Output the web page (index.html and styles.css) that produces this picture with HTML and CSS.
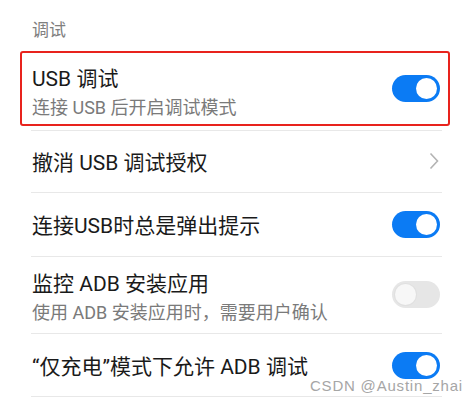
FILE: index.html
```html
<!DOCTYPE html>
<html lang="zh-CN">

<head>
    <meta charset="UTF-8">
    <meta name="viewport" content="width=device-width, initial-scale=1.0">
    <title>调试</title>
    <link rel="stylesheet" href="styles.css">
</head>

<body>
    <div class="page">
        <div class="section-title">调试</div>

        <div class="item highlight">
            <div class="box">
                <div class="text">
                    <div class="title">USB 调试</div>
                    <div class="sub">连接 USB 后开启调试模式</div>
                </div>
                <span class="switch on"></span>
            </div>
        </div>

        <div class="item single">
            <div class="text">
                <div class="title">撤消 USB 调试授权</div>
            </div>
            <svg class="chevron" width="10" height="18" viewBox="0 0 10 18">
                <path d="M1.5 1.5 L8.5 9 L1.5 16.5" fill="none" stroke="#b3b3b3" stroke-width="1.6" />
            </svg>
        </div>

        <div class="item single tall">
            <div class="text">
                <div class="title">连接USB时总是弹出提示</div>
            </div>
            <span class="switch on"></span>
        </div>

        <div class="item double">
            <div class="text">
                <div class="title">监控 ADB 安装应用</div>
                <div class="sub">使用 ADB 安装应用时，需要用户确认</div>
            </div>
            <span class="switch"></span>
        </div>

        <div class="item single last">
            <div class="text">
                <div class="title">“仅充电”模式下允许 ADB 调试</div>
            </div>
            <span class="switch on"></span>
            <span class="watermark">CSDN @Austin_zhai</span>
        </div>
    </div>
</body>

</html>
```

FILE: styles.css
```css
body {
    margin: 0;
    padding: 0;
    background-color: #fff;
    font-family: Roboto, "Noto Sans CJK SC", sans-serif;
    color: #1a1a1a;
}

.page {
    padding: 0 33px 0 31px;
}

.section-title {
    padding-top: 18px;
    margin-bottom: 9px;
    padding-left: 1px;
    font-size: 17px;
    line-height: 24px;
    color: #808080;
}

.item {
    position: relative;
    display: flex;
    align-items: center;
    border-bottom: 1px solid #e8e8e8;
    padding-left: 1px;
    padding-right: 2px;
}

.item.single {
    height: 62px;
}

.item.single .text {
    padding-top: 3px;
}

.item.tall {
    height: 63px;
}

.item.double {
    height: 76px;
    align-items: flex-start;
}

.item.double .text {
    padding-top: 13px;
}

.item.double .switch {
    margin-top: 24px;
}

.item.highlight {
    margin: 0 -8px 0 -11px;
    padding: 0 0 4px 0;
    border-bottom: none;
}

.item.highlight::after {
    content: "";
    position: absolute;
    left: 11px;
    right: 8px;
    bottom: -1px;
    border-bottom: 1px solid #e8e8e8;
}

.box {
    flex: 1;
    display: flex;
    align-items: center;
    height: 71px;
    padding: 0 8px 0 10px;
    border: 2px solid #e8231d;
    border-radius: 3px;
}

.box .text {
    align-self: flex-start;
    padding-top: 12px;
}

.text {
    flex: 1;
}

.title {
    font-size: 21px;
    line-height: 28px;
    color: #1a1a1a;
}

.sub {
    margin-top: 3px;
    font-size: 18px;
    line-height: 24px;
    color: #7a7a7a;
}

.switch {
    position: relative;
    width: 48px;
    height: 27px;
    border-radius: 14px;
    background-color: #e6e6e6;
    flex-shrink: 0;
}

.switch::after {
    content: "";
    position: absolute;
    top: 3px;
    left: 3px;
    width: 21px;
    height: 21px;
    border-radius: 50%;
    background-color: #f7f7f7;
    box-shadow: 0 0 0 1px #e0e0e0;
}

.switch.on {
    background-color: #0b7bf4;
}

.switch.on::after {
    left: 24px;
    background-color: #fff;
    box-shadow: none;
}

.chevron {
    margin-right: 1px;
}

.watermark {
    position: absolute;
    right: -21px;
    bottom: 2px;
    font-family: "Liberation Sans", sans-serif;
    font-size: 15px;
    line-height: 16px;
    color: #a6a6a6;
    letter-spacing: 0.8px;
}
```
